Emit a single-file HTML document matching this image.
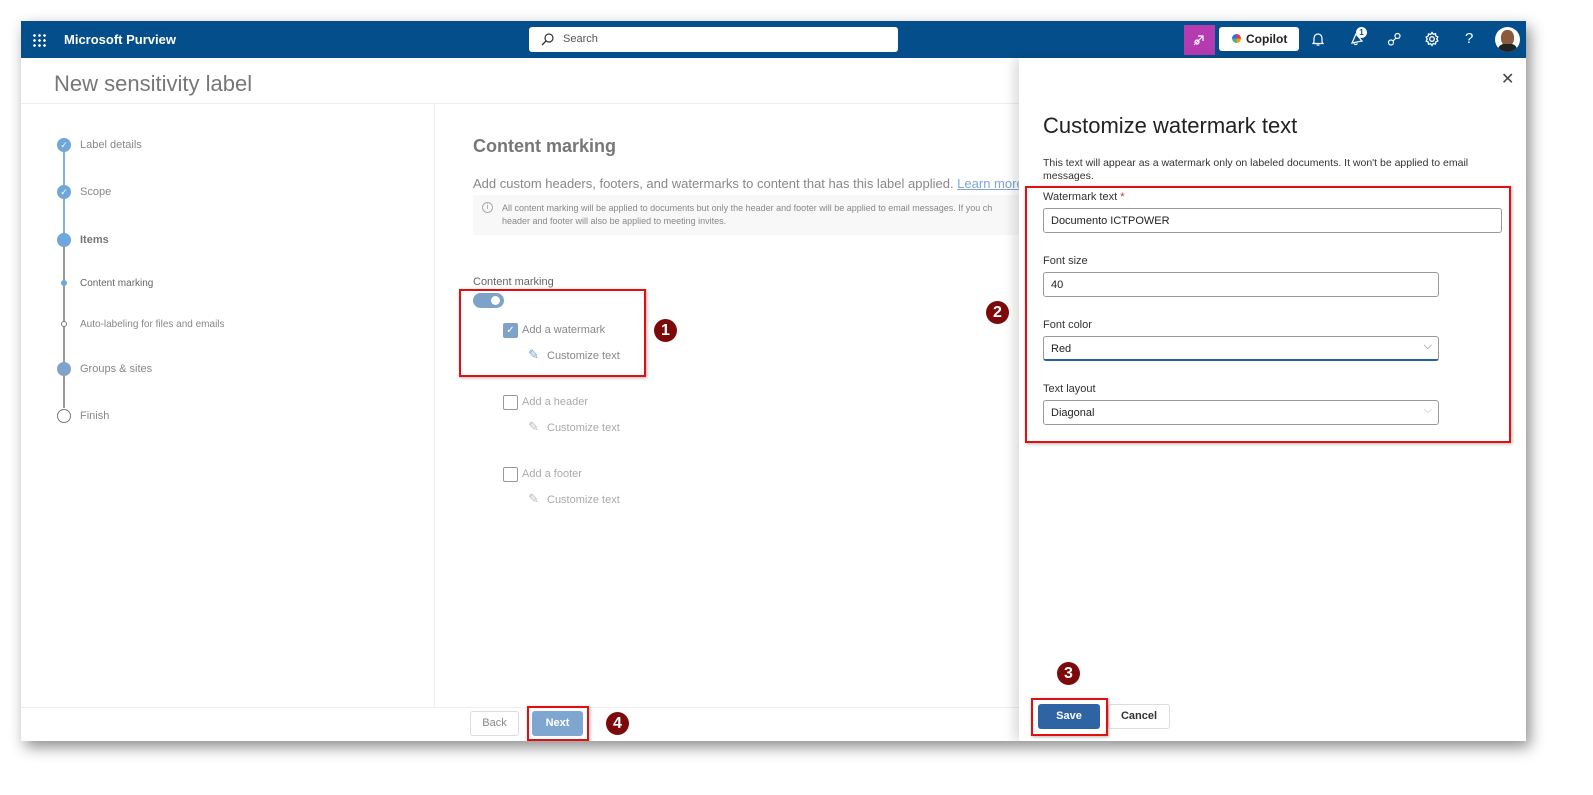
<!DOCTYPE html>
<html><head><meta charset="utf-8"><style>
*{box-sizing:border-box;margin:0;padding:0}
body{width:1593px;height:795px;background:#fff;font-family:"Liberation Sans",sans-serif;position:relative;overflow:hidden}
.app{position:absolute;left:21px;top:21px;width:1505px;height:720px;background:#fff;box-shadow:4px 6px 14px rgba(0,0,0,.45);overflow:hidden}
.abs{position:absolute}
.nav{left:0;top:0;width:1505px;height:37px;background:#044e8b}
.g{color:#888}
.red{position:absolute;border:2px solid #e01010;box-shadow:1px 1px 3px rgba(0,0,0,.3)}
.num{position:absolute;width:23px;height:23px;border-radius:50%;background:#7d0a0a;color:#fff;font-weight:bold;font-size:16px;text-align:center;line-height:23px}
.step{position:absolute;left:59px;font-size:11px;color:#888}
.inp{position:absolute;left:24px;height:25px;border:1px solid #999;border-radius:3px;font-size:11px;color:#222;padding:6px 7px}
.lab{position:absolute;left:24px;font-size:11px;color:#333}
.chk{position:absolute;width:15px;height:15px;border:1px solid #999;border-radius:2px}
</style></head><body>
<div class="app">
 <div class="abs nav">
  <div class="abs" style="left:11px;top:12px;width:14px;height:14px;background:radial-gradient(circle,#fff 1.2px,transparent 1.5px) 0 0/5px 5px"></div>
  <div class="abs" style="left:43px;top:11px;color:#fff;font-weight:bold;font-size:13px">Microsoft Purview</div>
  <div class="abs" style="left:508px;top:6px;width:369px;height:25px;background:#fff;border-radius:3px;font-size:11px;color:#555;padding:6px 0 0 34px">Search
   <svg class="abs" style="left:12px;top:6px" width="13" height="13" viewBox="0 0 13 13"><circle cx="8" cy="5" r="4" fill="none" stroke="#333" stroke-width="1.2"/><path d="M5 8L1 12" stroke="#333" stroke-width="1.3"/></svg></div>
  <div class="abs" style="left:1163px;top:4px;width:31px;height:30px;background:#b43bb0"></div>
  <svg class="abs" style="left:1171px;top:11px" width="15" height="15" viewBox="0 0 15 15" fill="none" stroke="#fff" stroke-width="1.2"><path d="M4 11L11 4M6 4h5v5M3 12l-1 1"/><circle cx="5" cy="10" r="2"/></svg>
  <div class="abs" style="left:1198px;top:6px;width:80px;height:24px;background:#fff;border-radius:3px;font-size:12px;font-weight:bold;color:#222;padding:5px 0 0 27px">Copilot<div class="abs" style="left:13px;top:7px;width:9px;height:9px;border-radius:50%;background:conic-gradient(#e34 0 25%,#f90 0 50%,#3b8 0 75%,#36f 0)"></div></div>
  <svg class="abs" style="left:1290px;top:11px" width="14" height="15" viewBox="0 0 14 15" fill="none" stroke="#fff" stroke-width="1.2"><path d="M3 10V6a4 4 0 0 1 8 0v4l1 1.5H2z"/><path d="M5.5 13h3"/></svg>
  <svg class="abs" style="left:1328px;top:10px" width="16" height="16" viewBox="0 0 16 16" fill="none" stroke="#fff" stroke-width="1.2"><path d="M3 12l4-9 6 7z"/><path d="M5 12.5a2 2 0 0 0 3.5 0"/></svg>
  <div class="abs" style="left:1335px;top:6px;width:11px;height:11px;border-radius:50%;background:#fff;color:#044e8b;font-size:8px;text-align:center;line-height:11px;font-weight:bold">1</div>
  <svg class="abs" style="left:1366px;top:11px" width="15" height="15" viewBox="0 0 15 15" fill="none" stroke="#fff" stroke-width="1.2"><circle cx="4" cy="10.5" r="2.5"/><circle cx="10.5" cy="4" r="2.5"/><path d="M6 9l3-3"/></svg>
  <svg class="abs" style="left:1403px;top:10px" width="16" height="16" viewBox="0 0 16 16" fill="none" stroke="#fff" stroke-width="1.3"><circle cx="8" cy="8" r="2.3"/><path d="M8 1.5l1.3 1.8 2.2-.6.3 2.2 2 1-1 2 1 2-2 1-.3 2.2-2.2-.6L8 14.5l-1.3-1.8-2.2.6-.3-2.2-2-1 1-2-1-2 2-1 .3-2.2 2.2.6z"/></svg>
  <div class="abs" style="left:1444px;top:9px;color:#fff;font-size:15px">?</div>
  <div class="abs" style="left:1474px;top:6px;width:25px;height:25px;border-radius:50%;background:#fff;overflow:hidden"><div class="abs" style="left:6px;top:3px;width:13px;height:16px;border-radius:45%;background:#8a5a3c"></div><div class="abs" style="left:3px;top:17px;width:19px;height:10px;background:#222;border-radius:6px 6px 0 0"></div></div>
 </div>
 <div class="abs" style="left:33px;top:50px;font-size:22px;color:#777">New sensitivity label</div>
 <div class="abs" style="left:0;top:82px;width:1505px;height:1px;background:#eee"></div>
 <div class="abs" style="left:413px;top:83px;width:1px;height:603px;background:#eee"></div>
 <div class="abs" style="left:42px;top:131px;width:2px;height:90px;background:#7fb0de"></div>
 <div class="abs" style="left:42px;top:221px;width:2px;height:120px;background:#999"></div>
 <div class="abs" style="left:42px;top:355px;width:2px;height:32px;background:#999"></div>
 <div class="abs" style="left:36px;top:117px;width:14px;height:14px;border-radius:50%;background:#6fa6dc;color:#fff;font-size:9px;text-align:center;line-height:14px">✓</div>
 <div class="abs" style="left:36px;top:164px;width:14px;height:14px;border-radius:50%;background:#6fa6dc;color:#fff;font-size:9px;text-align:center;line-height:14px">✓</div>
 <div class="abs" style="left:36px;top:212px;width:14px;height:14px;border-radius:50%;background:#6fa6dc"></div>
 <div class="abs" style="left:40px;top:259px;width:6px;height:6px;border-radius:50%;background:#6fa6dc"></div>
 <div class="abs" style="left:40px;top:300px;width:6px;height:6px;border-radius:50%;border:1px solid #777;background:#fff"></div>
 <div class="abs" style="left:36px;top:341px;width:14px;height:14px;border-radius:50%;background:#7fa2c8"></div>
 <div class="abs" style="left:36px;top:388px;width:14px;height:14px;border-radius:50%;border:1.5px solid #777;background:#fff"></div>
 <div class="step" style="top:118px">Label details</div>
 <div class="step" style="top:165px">Scope</div>
 <div class="step" style="top:213px;font-weight:bold;color:#777">Items</div>
 <div class="step" style="top:257px;font-size:10px;color:#666">Content marking</div>
 <div class="step" style="top:298px;font-size:10px">Auto-labeling for files and emails</div>
 <div class="step" style="top:342px">Groups &amp; sites</div>
 <div class="step" style="top:389px">Finish</div>
 <div class="abs" style="left:452px;top:115px;font-size:18px;font-weight:bold;color:#777">Content marking</div>
 <div class="abs g" style="left:452px;top:155px;font-size:13px;white-space:nowrap">Add custom headers, footers, and watermarks to content that has this label applied. <span style="color:#7fa6d6;text-decoration:underline">Learn more ab</span></div>
 <div class="abs" style="left:452px;top:174px;width:546px;height:40px;background:#f8f8f8;font-size:9px;color:#888;padding:7px 0 0 29px;line-height:13px;white-space:nowrap;overflow:hidden">All content marking will be applied to documents but only the header and footer will be applied to email messages. If you ch<br>header and footer will also be applied to meeting invites.<div class="abs" style="left:9px;top:7px;width:11px;height:11px;border:1px solid #aaa;border-radius:50%;font-size:7px;text-align:center;line-height:10px">i</div></div>
 <div class="abs" style="left:452px;top:255px;font-size:11px;color:#666">Content marking</div>
 <div class="abs" style="left:452px;top:272px;width:31px;height:15px;border-radius:8px;background:#7fa2c8"><div class="abs" style="left:18px;top:3px;width:9px;height:9px;border-radius:50%;background:#fff"></div></div>
 <div class="chk" style="left:482px;top:302px;background:#7fa2c8;border-color:#7fa2c8;color:#fff;font-size:10px;text-align:center;line-height:13px">✓</div>
 <div class="abs" style="left:501px;top:303px;font-size:11px;color:#888">Add a watermark</div>
 <div class="abs" style="left:526px;top:329px;font-size:11px;color:#888">Customize text</div>
 <div class="abs" style="left:507px;top:326px;font-size:13px;color:#7fa2c8">✎</div>
 <div class="chk" style="left:482px;top:374px"></div>
 <div class="abs" style="left:501px;top:375px;font-size:11px;color:#aaa">Add a header</div>
 <div class="abs" style="left:507px;top:398px;font-size:13px;color:#bbb">✎</div>
 <div class="abs" style="left:526px;top:401px;font-size:11px;color:#aaa">Customize text</div>
 <div class="chk" style="left:482px;top:446px"></div>
 <div class="abs" style="left:501px;top:447px;font-size:11px;color:#aaa">Add a footer</div>
 <div class="abs" style="left:507px;top:470px;font-size:13px;color:#bbb">✎</div>
 <div class="abs" style="left:526px;top:473px;font-size:11px;color:#aaa">Customize text</div>
 <div class="red" style="left:438px;top:268px;width:187px;height:88px"></div>
 <div class="num" style="left:633px;top:298px">1</div>
 <div class="num" style="left:965px;top:280px">2</div>
 <div class="abs" style="left:0;top:686px;width:1000px;height:1px;background:#eee"></div>
 <div class="abs" style="left:449px;top:690px;width:49px;height:25px;border:1px solid #ddd;border-radius:3px;font-size:11px;color:#888;text-align:center;line-height:23px">Back</div>
 <div class="abs" style="left:511px;top:690px;width:51px;height:25px;background:#7fa6d0;border-radius:3px;font-size:11px;font-weight:bold;color:#fff;text-align:center;line-height:25px">Next</div>
 <div class="red" style="left:506px;top:685px;width:62px;height:35px"></div>
 <div class="num" style="left:585px;top:691px">4</div>
 <div class="abs" style="left:998px;top:37px;width:507px;height:683px;background:#fff;box-shadow:-6px 0 10px rgba(0,0,0,.12)">
  <div class="abs" style="left:482px;top:11px;font-size:16px;color:#444">✕</div>
  <div class="abs" style="left:24px;top:55px;font-size:22px;color:#222">Customize watermark text</div>
  <div class="abs" style="left:24px;top:99px;width:450px;font-size:10.5px;color:#333;line-height:13px">This text will appear as a watermark only on labeled documents. It won't be applied to email messages.</div>
  <div class="lab" style="top:133px">Watermark text <span style="color:#c33">*</span></div>
  <div class="inp" style="top:150px;width:459px">Documento ICTPOWER</div>
  <div class="lab" style="top:197px">Font size</div>
  <div class="inp" style="top:214px;width:396px">40</div>
  <div class="lab" style="top:261px">Font color</div>
  <div class="inp" style="top:278px;width:396px;border-bottom:2px solid #2a5f9e">Red<span class="abs" style="right:6px;top:3px;color:#666;font-size:11px">⌵</span></div>
  <div class="lab" style="top:325px">Text layout</div>
  <div class="inp" style="top:342px;width:396px">Diagonal<span class="abs" style="right:6px;top:3px;color:#bbb;font-size:11px">⌵</span></div>
  <div class="red" style="left:6px;top:128px;width:486px;height:257px"></div>
  <div class="num" style="left:38px;top:604px">3</div>
  <div class="abs" style="left:19px;top:646px;width:62px;height:25px;background:#2f64a4;border-radius:3px;font-size:11px;font-weight:bold;color:#fff;text-align:center;line-height:25px">Save</div>
  <div class="abs" style="left:89px;top:646px;width:62px;height:25px;border:1px solid #ddd;border-radius:3px;font-size:11px;font-weight:bold;color:#333;text-align:center;line-height:23px">Cancel</div>
  <div class="red" style="left:12px;top:640px;width:77px;height:38px"></div>
 </div>
</div>
</body></html>
